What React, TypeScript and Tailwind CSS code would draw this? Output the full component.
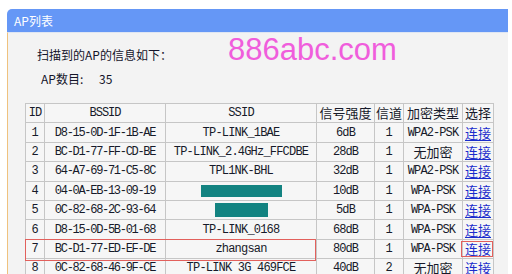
import React from "react";

const mono = "font-['Liberation_Mono','Noto_Sans_CJK_SC',monospace]";
const cjk = "font-['Noto_Sans_CJK_SC',sans-serif]";

type Row = {
  id: string;
  bssid: string;
  ssid: string | null;
  bar?: [number, number];
  db: string;
  ch: string;
  enc: string;
  hl?: boolean;
};

const rows: Row[] = [
  { id: "1", bssid: "D8-15-0D-1F-1B-AE", ssid: "TP-LINK_1BAE", db: "6dB", ch: "1", enc: "WPA2-PSK" },
  { id: "2", bssid: "BC-D1-77-FF-CD-BE", ssid: "TP-LINK_2.4GHz_FFCDBE", db: "28dB", ch: "1", enc: "无加密" },
  { id: "3", bssid: "64-A7-69-71-C5-8C", ssid: "TPL1NK-BHL", db: "32dB", ch: "1", enc: "WPA2-PSK" },
  { id: "4", bssid: "04-0A-EB-13-09-19", ssid: null, bar: [81, 12], db: "10dB", ch: "1", enc: "WPA-PSK" },
  { id: "5", bssid: "0C-82-68-2C-93-64", ssid: null, bar: [53, 14], db: "5dB", ch: "1", enc: "WPA-PSK" },
  { id: "6", bssid: "D8-15-0D-5B-01-68", ssid: "TP-LINK_0168", db: "68dB", ch: "1", enc: "WPA-PSK" },
  { id: "7", bssid: "BC-D1-77-ED-EF-DE", ssid: "zhangsan", db: "80dB", ch: "1", enc: "WPA-PSK", hl: true },
  { id: "8", bssid: "0C-82-68-46-9F-CE", ssid: "TP-LINK 3G 469FCE", db: "40dB", ch: "2", enc: "无加密" },
];

const td = "border border-[#c6c6c6] p-0 text-center align-middle whitespace-nowrap h-[19.4px] leading-[12px]";
const cj = `${cjk} text-[13px] leading-[12px]`;

export default function App() {
  return (
    <div className="w-[512px] h-[274px] bg-white overflow-hidden pt-[9px] pl-[7px] pr-[4px] relative">
      <div className={`h-[23px] bg-[#6597f6] rounded-tl-[5px] text-white text-[12px] pl-[7px] flex items-center ${cjk}`}>
        AP列表
      </div>
      <div className="border-l border-[#efc27e] bg-[#f3f3f3] h-[260px] pl-[17px] pt-[14px] border-t border-t-[#dfe6f3]">
        <div className={`text-[12px] leading-[16px] text-[#14142a] pl-[12px] ${cjk}`}>扫描到的AP的信息如下：</div>
        <div className={`text-[12px] leading-[16px] text-[#14142a] pl-[16px] mt-[8px] flex ${cjk}`}>
          <span className="w-[58px]">AP数目:</span>
          <span>35</span>
        </div>
        <table className="mt-[16px] border-collapse table-fixed w-[468px] bg-[#f6f6f6] text-[#161a2a]">
          <colgroup>
            <col className="w-[19px]" />
            <col className="w-[121px]" />
            <col className="w-[151px]" />
            <col className="w-[58px]" />
            <col className="w-[29px]" />
            <col className="w-[59px]" />
            <col className="w-[31px]" />
          </colgroup>
          <thead>
            <tr>
              <td className={`${td} ${mono} text-[12px] tracking-[-1px]`}>ID</td>
              <td className={`${td} ${mono} text-[12px] tracking-[-1px]`}>BSSID</td>
              <td className={`${td} ${mono} text-[12px] tracking-[-0.8px]`}>SSID</td>
              <td className={`${td} ${cj}`}>信号强度</td>
              <td className={`${td} ${cj}`}>信道</td>
              <td className={`${td} ${cj}`}>加密类型</td>
              <td className={`${td} ${cj}`}>选择</td>
            </tr>
          </thead>
          <tbody>
            {rows.map((r) => (
              <tr key={r.id}>
                <td className={`${td} ${mono} text-[12px]`}>{r.id}</td>
                <td className={`${td} ${mono} text-[12px] tracking-[-1.3px]`}>{r.bssid}</td>
                <td className={`${td} ${mono} text-[12px] tracking-[-0.8px]`}>
                  {r.ssid !== null ? (
                    r.ssid
                  ) : (
                    <div
                      className="bg-[#138381] mx-auto"
                      style={{ width: r.bar![0], height: r.bar![1] }}
                    />
                  )}
                </td>
                <td className={`${td} ${mono} text-[12px] tracking-[-0.9px]`}>{r.db}</td>
                <td className={`${td} ${mono} text-[12px]`}>{r.ch}</td>
                <td className={`${td} ${r.enc === "无加密" ? cj : `${mono} text-[12px] tracking-[-0.9px]`}`}>
                  {r.enc}
                </td>
                <td className={`${td} ${cj} relative`}>
                  <span className="text-[#1a2ccc] underline underline-offset-2">连接</span>
                  {r.hl && (
                    <div className="absolute left-[-2px] right-[0px] top-[1px] bottom-[1px] border border-[#e2605c]" />
                  )}
                </td>
              </tr>
            ))}
          </tbody>
        </table>
      </div>
      {/* red highlight over ID/BSSID/SSID in row 7 */}
      <div className="absolute left-[25px] top-[239px] w-[291px] h-[22px] border border-[#e2605c] pointer-events-none" />
      <div className="absolute left-[228px] top-[31px] text-[31px] leading-[38px] text-[#f05ddc] font-['Liberation_Sans',Arial,sans-serif]">
        886abc.com
      </div>
    </div>
  );
}
